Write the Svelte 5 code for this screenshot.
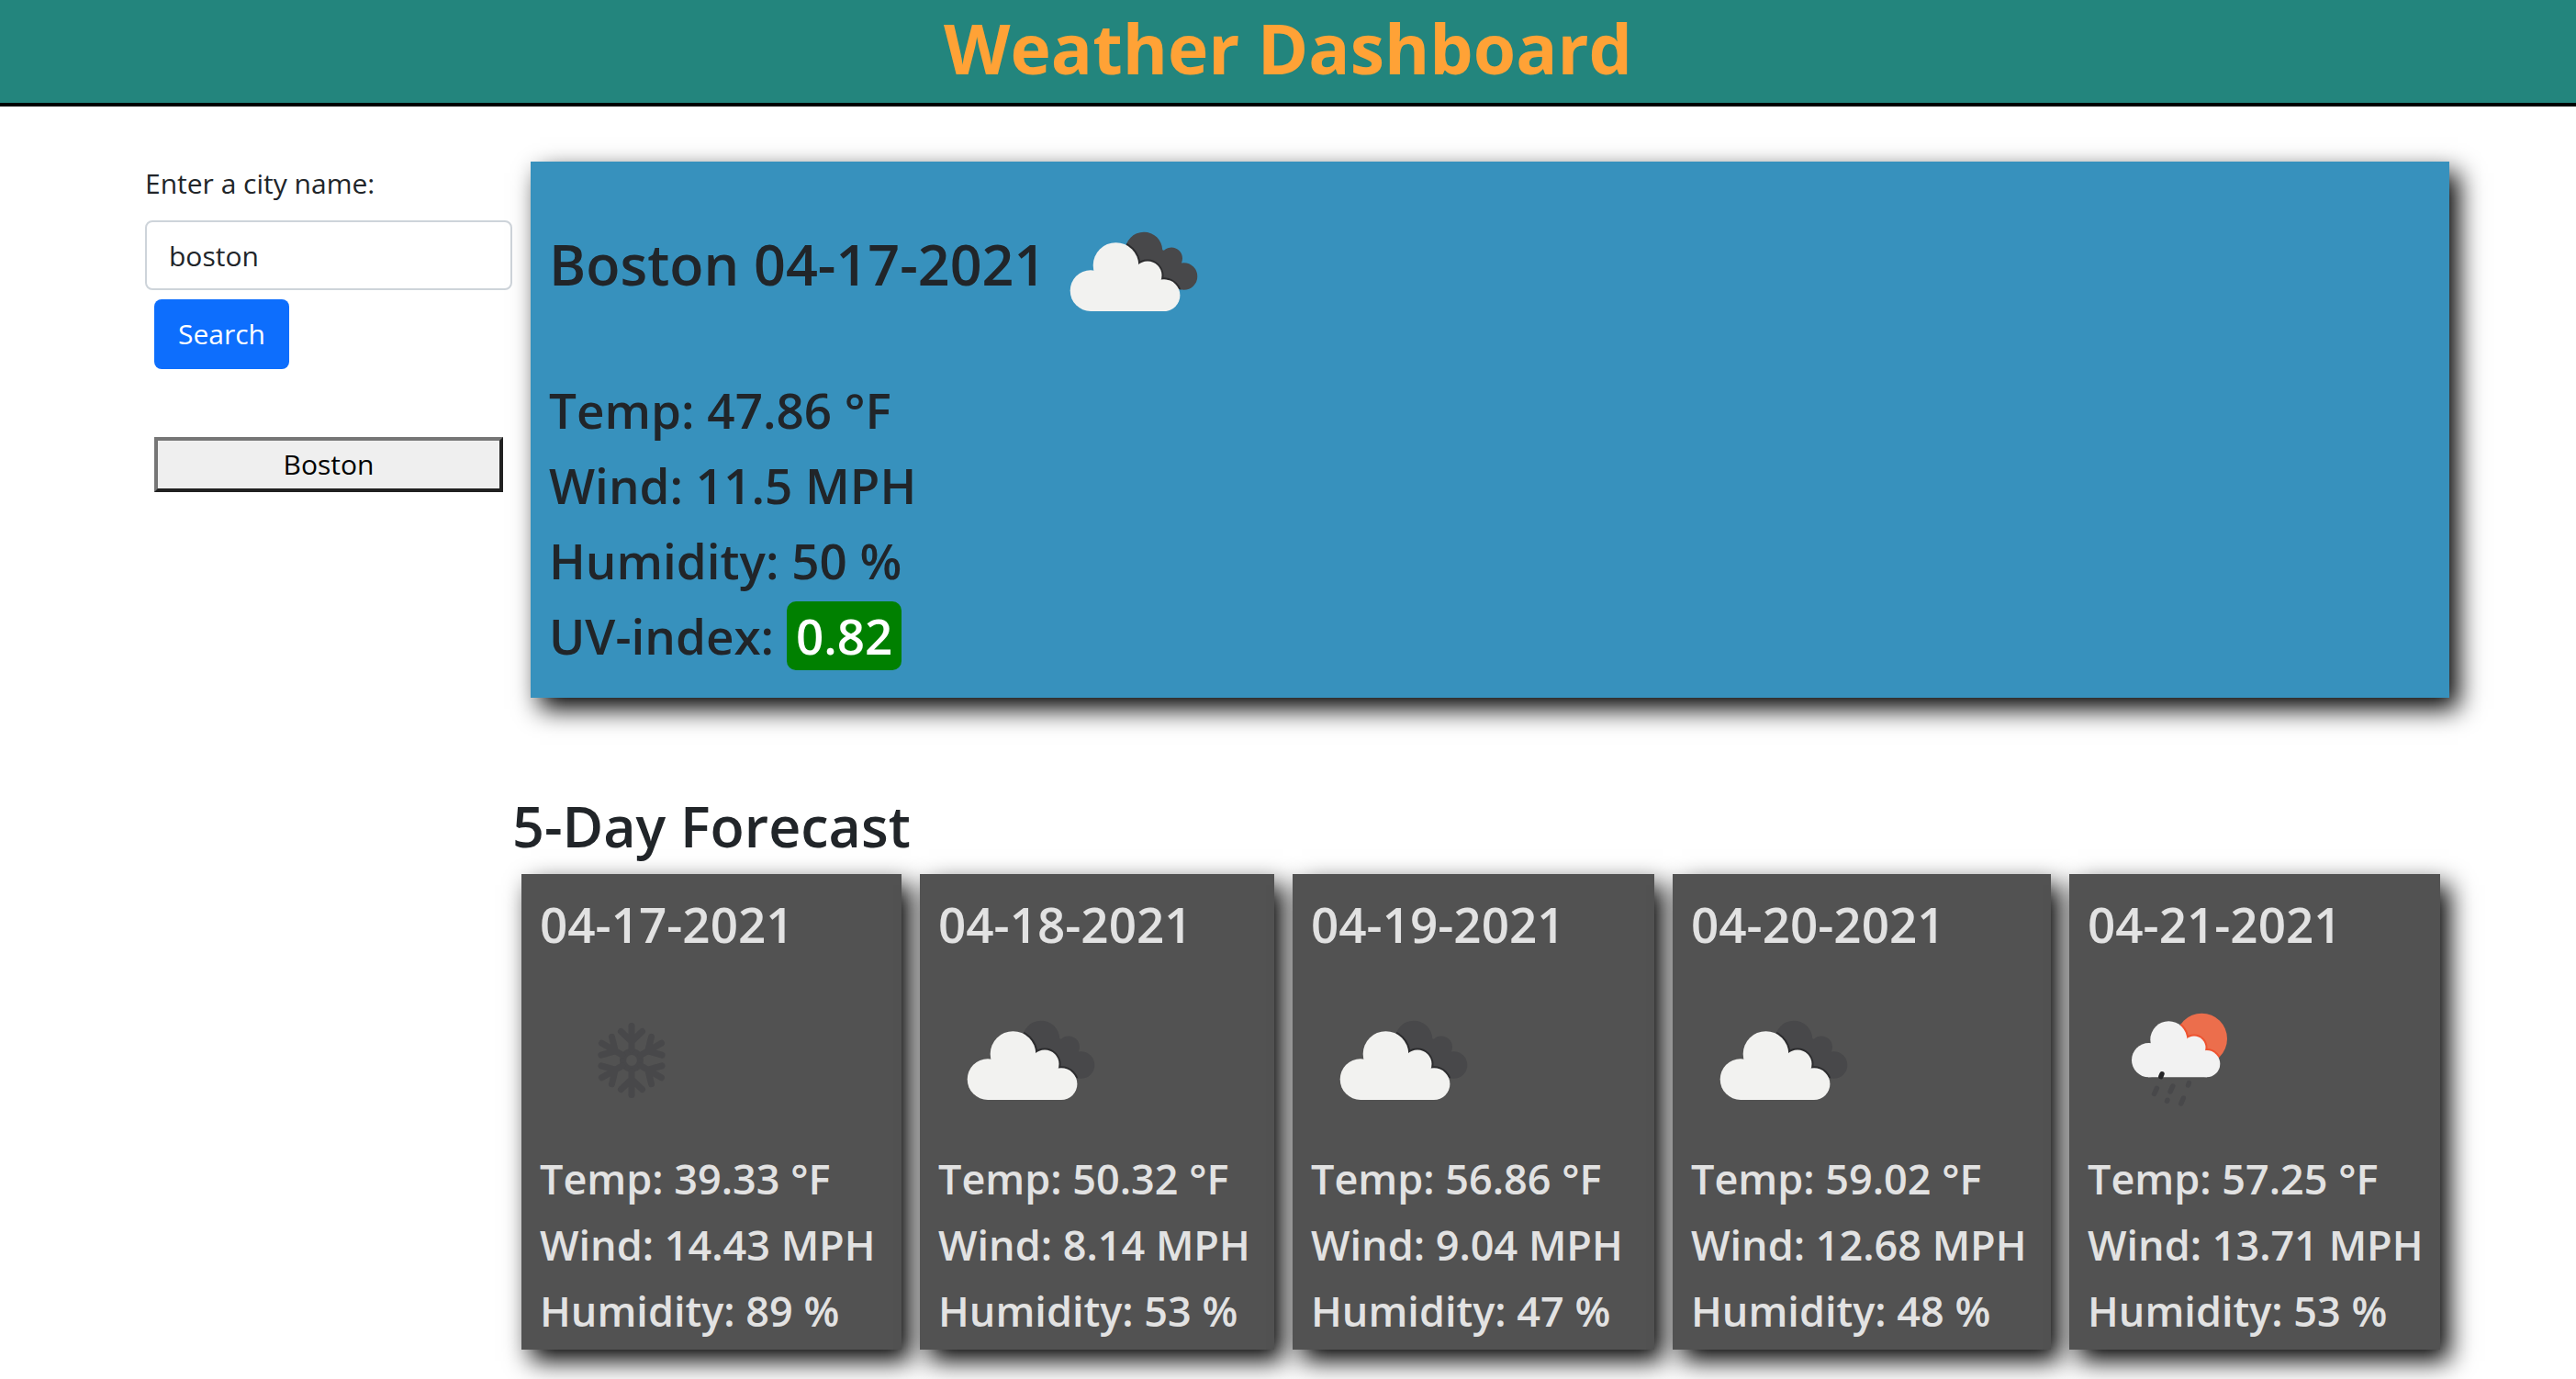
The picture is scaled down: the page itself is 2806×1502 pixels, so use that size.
<script>
  let city = $state('boston');

  const history = ['Boston'];

  const today = {
    title: 'Boston 04-17-2021',
    icon: 'clouds',
    lines: ['Temp: 47.86 °F', 'Wind: 11.5 MPH', 'Humidity: 50 %'],
    uv: '0.82'
  };

  const forecast = [
    { date: '04-17-2021', icon: 'snow', temp: '39.33', wind: '14.43', humidity: 89 },
    { date: '04-18-2021', icon: 'clouds', temp: '50.32', wind: '8.14', humidity: 53 },
    { date: '04-19-2021', icon: 'clouds', temp: '56.86', wind: '9.04', humidity: 47 },
    { date: '04-20-2021', icon: 'clouds', temp: '59.02', wind: '12.68', humidity: 48 },
    { date: '04-21-2021', icon: 'rain', temp: '57.25', wind: '13.71', humidity: 53 }
  ];

  const arms = [0, 60, 120, 180, 240, 300];
</script>

{#snippet frontCloud()}
  <circle cx="54" cy="120.6" r="22.3" />
  <circle cx="81.5" cy="93" r="24.8" />
  <circle cx="116" cy="104" r="15.5" />
  <circle cx="134" cy="125.7" r="17.4" />
  <path d="M54 100H118L134 112V143H54Z" />
{/snippet}

{#snippet rainCloud()}
  <circle cx="66.6" cy="99.7" r="18.6" />
  <circle cx="88.3" cy="77.3" r="20" />
  <circle cx="116" cy="86" r="12.5" />
  <circle cx="129.7" cy="103.7" r="14.6" />
  <path d="M66 85H116L130 94V118.3H66Z" />
{/snippet}

{#snippet weatherIcon(kind, id)}
  <svg class="icon" viewBox="0 0 200 200" role="img" aria-label={kind}>
    {#if kind === 'clouds'}
      <defs>
        <clipPath id="back-{id}">
          <circle cx="112" cy="77" r="20.3" />
          <circle cx="142" cy="85.5" r="12" />
          <circle cx="155.5" cy="105" r="14.8" />
          <path d="M100 90L125 74L145 80L155 112L146 118L100 118Z" />
        </clipPath>
      </defs>
      <g clip-path="url(#back-{id})">
        <rect width="200" height="200" fill="#48484a" />
        <g fill="none" stroke="#2c2c2e" stroke-width="4">{@render frontCloud()}</g>
      </g>
      <g fill="#f2f2f0">{@render frontCloud()}</g>
    {:else if kind === 'rain'}
      <defs>
        <clipPath id="sun-{id}"><circle cx="124.3" cy="76.4" r="27.7" /></clipPath>
      </defs>
      <g clip-path="url(#sun-{id})">
        <rect width="200" height="200" fill="#ec6e4c" />
        <g fill="none" stroke="#ee5330" stroke-width="4">{@render rainCloud()}</g>
      </g>
      <g fill="#f2f2f2">{@render rainCloud()}</g>
      <g fill="none" stroke="#48484a" stroke-width="5.4" stroke-linecap="round">
        <path d="M75.4 130.4L72.6 136.4M92.8 128L90 134M110.4 124.6L109.6 127M86.9 143.2L86.5 144.2M104.4 141L101.8 147" />
        <path d="M81 114.8L79.8 117.6" stroke="#252527" />
      </g>
    {:else}
      <g fill="none" stroke="#48484a" stroke-width="7" stroke-linecap="round">
        <circle cx="100" cy="100" r="9.4" />
        {#each arms as angle}
          <path d="M100 88V62.5M88.5 68.5L100 79.5L111.5 68.5" transform="rotate({angle} 100 100)" />
        {/each}
      </g>
    {/if}
  </svg>
{/snippet}

<header>
  <h1>Weather Dashboard</h1>
</header>

<main>
  <aside>
    <form onsubmit={(e) => e.preventDefault()}>
      <label for="city">Enter a city name:</label>
      <input id="city" type="text" bind:value={city} />
      <button class="search" type="submit">Search</button>
    </form>
    <div class="history">
      {#each history as name}
        <button type="button" onclick={() => (city = name)}>{name}</button>
      {/each}
    </div>
  </aside>

  <div class="results">
    <section class="today">
      <div class="heading">
        <h2>{today.title}</h2>
        {@render weatherIcon(today.icon, 'today')}
      </div>
      {#each today.lines as line}
        <p>{line}</p>
      {/each}
      <p>UV-index: <span class="uv">{today.uv}</span></p>
    </section>

    <h2 class="forecast-title">5-Day Forecast</h2>
    <section class="forecast">
      {#each forecast as day, i}
        <article>
          <h3>{day.date}</h3>
          {@render weatherIcon(day.icon, i)}
          <div class="stats">
            <p>Temp: {day.temp} °F</p>
            <p>Wind: {day.wind} MPH</p>
            <p>Humidity: {day.humidity} %</p>
          </div>
        </article>
      {/each}
    </section>
  </div>
</main>

<style>
  :global(body) {
    margin: 0;
    background: #fff;
    color: #212529;
    font-family: 'Segoe UI', 'Open Sans', 'Noto Sans', sans-serif;
    font-size: 30px;
    line-height: 48px;
  }

  h1,
  h2,
  h3,
  p {
    margin: 0;
  }

  h2,
  h3,
  p {
    font-weight: 600;
    white-space: nowrap;
  }

  header {
    height: 112px;
    border-bottom: 4px solid #000;
    background: #23857d;
    text-align: center;
  }

  h1 {
    color: #ffa236;
    font-size: 75px;
    font-weight: 700;
    line-height: 104px;
  }

  main {
    display: grid;
    grid-template-columns: 400px minmax(0, 1fr);
    padding: 60px 118px 32px 158px;
  }

  form {
    display: flex;
    flex-direction: column;
    align-items: flex-start;
  }

  label {
    margin-bottom: 16px;
  }

  input,
  button {
    box-sizing: border-box;
    font: inherit;
  }

  input {
    width: 100%;
    height: 76px;
    padding: 0 24px;
    border: 2px solid #ced4da;
    border-radius: 8px;
    background: #fff;
    color: #212529;
  }

  .search {
    height: 76px;
    margin: 10px;
    padding: 0 26px;
    border: 0;
    border-radius: 8px;
    background: #0d6efd;
    color: #fff;
  }

  .history {
    display: grid;
    gap: 20px;
    padding: 64px 10px 0;
  }

  .history button {
    height: 60px;
    padding: 0;
    border: 4px solid;
    border-color: #767676 #212121 #212121 #767676;
    border-radius: 0;
    background: #efefef;
    color: #000;
  }

  .today,
  article {
    box-shadow: 10px 12px 26px #000;
  }

  .today {
    margin: 0 20px;
    padding: 20px 20px 26px;
    background: #3791bd;
  }

  .heading {
    display: flex;
    align-items: center;
    margin-bottom: 10px;
  }

  .heading h2 {
    margin-right: -5px;
    padding-bottom: 16px;
  }

  h2 {
    font-size: 61px;
    line-height: 76px;
  }

  .icon {
    display: block;
    flex: none;
    width: 200px;
    height: 200px;
  }

  .today p {
    font-size: 53px;
    line-height: 82px;
  }

  .uv {
    padding: 1px 10px;
    border-radius: 10px;
    background: #008000;
    color: #fff;
  }

  .forecast-title {
    margin-top: 102px;
    margin-bottom: 14px;
  }

  .forecast {
    display: grid;
    grid-template-columns: 414fr 386fr 394fr 412fr 404fr;
    gap: 20px;
    padding: 0 30px 0 10px;
  }

  article {
    min-width: 0;
    padding: 20px 0 6px 20px;
    background: #525252;
    color: #e2e2e2;
  }

  h3 {
    margin-bottom: 14px;
    font-size: 53px;
    line-height: 69px;
  }

  .stats {
    margin-top: -7px;
  }

  .stats p {
    font-size: 45px;
    line-height: 72px;
  }
</style>
